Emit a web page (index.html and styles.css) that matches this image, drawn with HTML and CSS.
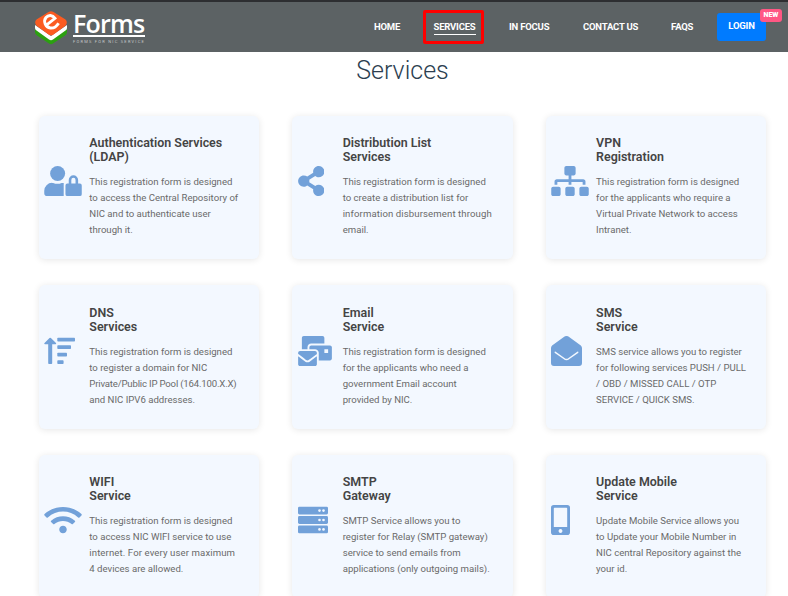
FILE: index.html
```html
<!DOCTYPE html>
<html lang="en">
<head>
<meta charset="utf-8">
<title>eForms Services</title>
<link rel="stylesheet" href="styles.css">
</head>
<body>
<header class="header">
  <div class="brand">
    <svg class="brand-mark" viewBox="0 0 34 36">
      <path d="M1 18 L17 29 L33 18 V22 Q33 24 31 25.5 L19 33.6 Q17 35 15 33.6 L3 25.5 Q1 24 1 22Z" fill="#2ba010"/>
      <path d="M1 15 L17 26 L33 15 V18 Q33 19.500 31.500 20.500 L19 29.500 Q17 31 15 29.500 L2.500 20.500 Q1 19.500 1 18Z" fill="#fff"/>
      <path d="M14.500 2 Q17 .4 19.500 2 L31.500 9.500 Q34 12 31.800 15.500 L19.500 24.500 Q17 26.200 14.500 24.500 L2.200 15.500 Q0 12 2.500 9.500Z" fill="#fb5b21"/>
      <path d="M13.300 14.300 L21 8.300 C18.500 4.800 14.500 4.500 12 7.500 C8.900 11.200 11.500 17.300 16.300 18 C19.500 18.400 22.500 16.500 24.600 13.200" fill="none" stroke="#fff" stroke-width="2.900"/>
    </svg>
    <div class="brand-text">
      <span class="brand-name">Forms</span>
      <span class="brand-tag">FORMS FOR NIC SERVICE</span>
    </div>
  </div>
  <nav class="nav">
    <a class="home">HOME</a>
    <a class="active"><span>SERVICES</span></a>
    <a class="focus">IN FOCUS</a>
    <a class="contact">CONTACT US</a>
    <a class="faqs">FAQS</a>
    <a class="login">LOGIN<b class="badge">NEW</b></a>
  </nav>
</header>
<main>
  <h1>Services</h1>
  <section class="grid">
    <article class="card">
      <div class="icon"><svg width="38" height="30" viewBox="0 0 640 512"><circle cx="228" cy="128" r="128"/><path d="M135 288h17a174 174 0 0 0 146 0h17q10 0 17 2v222H48a48 48 0 0 1-48-48v-42A134 134 0 0 1 135 288z"/><path fill-rule="evenodd" d="M394 300h24v-62a80 80 0 0 1 160 0v62h30a32 32 0 0 1 32 32v148a32 32 0 0 1-32 32H394a32 32 0 0 1-32-32V332a32 32 0 0 1 32-32zm68 0h72v-62a36 36 0 0 0-72 0z"/></svg></div>
      <div><h2>Authentication Services<br>(LDAP)</h2><p>This registration form is designed<br>to access the Central Repository of<br>NIC and to authenticate user<br>through it.</p></div>
    </article>
    <article class="card">
      <div class="icon"><svg width="26.500" height="30" viewBox="0 0 448 512"><path d="M352 320c-22.608 0-43.387 7.819-59.79 20.895l-102.486-64.054a96.551 96.551 0 0 0 0-41.683l102.486-64.054C308.613 184.181 329.392 192 352 192c53.019 0 96-42.981 96-96S405.019 0 352 0s-96 42.981-96 96c0 7.158.79 14.13 2.276 20.841L155.79 180.895C139.387 167.819 118.608 160 96 160c-53.019 0-96 42.981-96 96s42.981 96 96 96c22.608 0 43.387-7.819 59.79-20.895l102.486 64.054A96.301 96.301 0 0 0 256 416c0 53.019 42.981 96 96 96s96-42.981 96-96-42.981-96-96-96z"/></svg></div>
      <div><h2>Distribution List<br>Services</h2><p>This registration form is designed<br>to create a distribution list for<br><span class="wide">information disbursement through</span><br>email.</p></div>
    </article>
    <article class="card">
      <div class="icon"><svg width="38" height="30" viewBox="0 0 640 512"><path d="M128 352H32c-17.67 0-32 14.33-32 32v96c0 17.67 14.33 32 32 32h96c17.67 0 32-14.33 32-32v-96c0-17.67-14.33-32-32-32zm-24-80h192v48h48v-48h192v48h48v-57.59c0-21.17-17.23-38.41-38.41-38.41H344v-64h40c17.67 0 32-14.33 32-32V32c0-17.67-14.33-32-32-32H256c-17.67 0-32 14.33-32 32v96c0 17.67 14.33 32 32 32h40v64H94.41C73.23 224 56 241.23 56 262.41V320h48v-48zm264 80h-96c-17.67 0-32 14.33-32 32v96c0 17.67 14.33 32 32 32h96c17.67 0 32-14.33 32-32v-96c0-17.67-14.33-32-32-32zm240 0h-96c-17.67 0-32 14.33-32 32v96c0 17.67 14.33 32 32 32h96c17.67 0 32-14.33 32-32v-96c0-17.67-14.33-32-32-32z"/></svg></div>
      <div><h2>VPN<br>Registration</h2><p>This registration form is designed<br>for the applicants who require a<br>Virtual Private Network to access<br>Intranet.</p></div>
    </article>
    <article class="card">
      <div class="icon"><svg width="32" height="30" viewBox="0 0 32 30"><path d="M5.500 2Q6.200 1.300 6.900 2L12 7.100Q12.500 8.100 11.500 8.200H8.200V27.200q0 .8-.8.8H5q-.8 0-.8-.8V8.200H1Q-.1 8.100.5 7.100z"/><rect x="13.300" y="1.700" width="17.700" height="3.800" rx=".8"/><rect x="13.300" y="9.200" width="13.700" height="3.800" rx=".8"/><rect x="13.300" y="16.700" width="9.700" height="3.800" rx=".8"/><rect x="13.300" y="24.200" width="6.300" height="3.800" rx=".8"/></svg></div>
      <div><h2>DNS<br>Services</h2><p>This registration form is designed<br>to register a domain for NIC<br><span class="tight">Private/Public IP Pool (164.100.X.X)</span><br>and NIC IPV6 addresses.</p></div>
    </article>
    <article class="card">
      <div class="icon"><svg width="34" height="30" viewBox="0 0 576 512"><path d="M160 448c-25.6 0-51.2-22.4-64-32-64-44.8-83.2-60.8-96-70.4V480c0 17.67 14.33 32 32 32h256c17.67 0 32-14.33 32-32V345.600c-12.8 9.6-32 25.6-96 70.4-12.8 9.6-38.4 32-64 32zm128-192H32c-17.67 0-32 14.33-32 32v16c25.6 19.2 22.4 19.2 115.2 86.4 9.6 6.4 28.8 25.6 44.8 25.6s35.2-19.2 44.8-22.4c92.8-67.2 89.6-67.2 115.2-86.4V288c0-17.67-14.33-32-32-32zm256-96H224c-17.67 0-32 14.33-32 32v32h96c33.21 0 60.59 25.42 63.71 57.82l.29-.22V416h192c17.67 0 32-14.33 32-32V192c0-17.67-14.33-32-32-32zm-32 128h-64v-64h64v64zm-352-96c0-35.29 28.71-64 64-64h224V32c0-17.67-14.33-32-32-32H96C78.33 0 64 14.33 64 32v192h96v-32z"/></svg></div>
      <div><h2>Email<br>Service</h2><p>This registration form is designed<br>for the applicants who need a<br>government Email account<br>provided by NIC.</p></div>
    </article>
    <article class="card">
      <div class="icon"><svg width="31" height="30" viewBox="0 0 31 30"><path d="M1.100 9.500L12.500 1.200Q15.500-1.200 18.500 1.200L29.800 9.500Q31 10.500 31 12V27q0 3-3 3H3q-3 0-3-3V12Q0 10.500 1.100 9.500z"/><path class="crease" d="M4.300 16.300L13 22.500Q15.500 24.600 18 22.500L26.700 16.300"/></svg></div>
      <div><h2>SMS<br>Service</h2><p>SMS service allows you to register<br>for following services PUSH / PULL<br>/ OBD / MISSED CALL / OTP<br>SERVICE / QUICK SMS.</p></div>
    </article>
    <article class="card">
      <div class="icon"><svg width="38" height="30" viewBox="0 0 640 512"><path d="M634.91 154.88C457.74-8.99 182.19-8.93 5.09 154.88c-6.66 6.16-6.79 16.59-.35 22.98l34.24 33.97c6.14 6.1 16.02 6.23 22.4.38 145.92-133.68 371.3-133.71 517.25 0 6.38 5.85 16.26 5.71 22.4-.38l34.24-33.97c6.43-6.39 6.3-16.82-.36-22.98zM320 352c-35.35 0-64 28.65-64 64s28.65 64 64 64 64-28.65 64-64-28.65-64-64-64zm202.67-83.59c-115.26-101.93-290.21-101.82-405.34 0-6.9 6.1-7.12 16.69-.57 23.15l34.44 33.99c6 5.92 15.66 6.32 22.05.8 83.95-72.57 209.74-72.41 293.49 0 6.39 5.52 16.05 5.13 22.05-.8l34.44-33.99c6.56-6.46 6.33-17.06-.56-23.15z"/></svg></div>
      <div><h2>WIFI<br>Service</h2><p>This registration form is designed<br>to access NIC WIFI service to use<br><span class="wide">internet. For every user maximum</span><br>4 devices are allowed.</p></div>
    </article>
    <article class="card">
      <div class="icon"><svg width="30" height="30" viewBox="0 0 30 30"><rect y="1.700" width="30" height="7.800" rx="1.400"/><rect y="11.100" width="30" height="7.800" rx="1.400"/><rect y="20.500" width="30" height="7.800" rx="1.400"/><g fill="#f3f8ff"><circle cx="21.500" cy="5.600" r="1.300"/><circle cx="25.500" cy="5.600" r="1.300"/><circle cx="21.500" cy="15" r="1.300"/><circle cx="25.500" cy="15" r="1.300"/><circle cx="21.500" cy="24.400" r="1.300"/><circle cx="25.500" cy="24.400" r="1.300"/></g></svg></div>
      <div><h2>SMTP<br>Gateway</h2><p>SMTP Service allows you to<br>register for Relay (SMTP gateway)<br>service to send emails from<br>applications (only outgoing mails).</p></div>
    </article>
    <article class="card">
      <div class="icon"><svg width="19" height="30" viewBox="0 0 19 30"><path fill-rule="evenodd" d="M2.800 0H16.200Q19 0 19 2.800V27.200Q19 30 16.200 30H2.800Q0 30 0 27.200V2.800Q0 0 2.800 0zM3.500 2.800Q2.800 2.800 2.800 3.500V22H16.200V3.500Q16.200 2.800 15.500 2.800zM9.500 24.100a1.900 1.900 0 1 0 .01 0z"/></svg></div>
      <div><h2>Update Mobile<br>Service</h2><p>Update Mobile Service allows you<br>to Update your Mobile Number in<br>NIC central Repository against the<br>your id.</p></div>
    </article>
  </section>
</main>
</body>
</html>
```
FILE: styles.css
```css
* { box-sizing: border-box; }
html, body { margin: 0; height: 596px; overflow: hidden; }
body { font-family: Roboto, sans-serif; background: #fff; }
.header {
  height: 52px;
  border-top: 2px solid #2d2e31;
  background: #5c6264;
  display: flex;
  justify-content: space-between;
  align-items: flex-start;
  padding: 0 22px 0 34px;
}
.brand { display: flex; gap: 5px; padding-top: 8px; }
.brand-mark { width: 34px; height: 36px; }
.brand-text { display: flex; flex-direction: column; width: 72px; }
.brand-name {
  font: 600 25px/26px "Open Sans", sans-serif;
  height: 27px;
  color: #fff;
  letter-spacing: -.8px;
  border-bottom: 2px solid #fff;
  white-space: nowrap;
}
.brand-tag { font-size: 4px; line-height: 5px; padding-top: 2px; color: #c5c8c9; letter-spacing: 1.250px; white-space: nowrap; }
.nav { display: flex; align-items: flex-start; padding-top: 8px; }
.nav a { font-size: 9.500px; font-weight: 700; line-height: 14px; padding-top: 10px; color: #fff; white-space: nowrap; letter-spacing: -.2px; }
.home { width: 49px; }
.nav .active { width: 61px; height: 34px; border: 3px solid #f00; border-radius: 2px; margin-right: 25px; padding: 7px 0 0 7.500px; }
.active span { display: inline-block; border-bottom: 1px solid #fff; height: 15px; }
.focus { width: 74px; }
.contact { width: 88px; }
.faqs { width: 46px; }
.nav .login { position: relative; width: 49px; height: 28px; margin-top: 3px; padding-top: 0; background: #007bff; border-radius: 3px; text-align: center; line-height: 26px; }
.badge { position: absolute; left: 43px; top: -4px; width: 22px; height: 13px; border-radius: 3px; background: #ff5784; font-size: 7px; line-height: 12px; letter-spacing: 0; }
h1 { margin: 0; padding-left: 17px; height: 63.500px; font-size: 25px; line-height: 37px; font-weight: 300; text-align: center; color: #2c3e50; }
.grid { display: grid; grid-template-columns: repeat(3, 220.500px); grid-auto-rows: 143.600px; column-gap: 32.900px; row-gap: 26px; padding-left: 38.800px; }
.card { display: flex; padding: 20.500px 0 0 5.500px; border-radius: 6px; background: #f3f8ff; box-shadow: 0 1px 7px rgba(0, 0, 0, .1); white-space: nowrap; }
.icon { width: 45px; padding-top: 30px; flex: none; }
.icon svg { display: block; fill: #72a1d9; }
.icon .crease { fill: none; stroke: #f3f8ff; stroke-width: 1.500; stroke-linecap: round; }
h2 { margin: 0; font-size: 12.450px; line-height: 14px; font-weight: 600; color: #444; }
p { margin: 10px 0 0; font-size: 9.600px; line-height: 16px; color: #6a6a6a; }
.wide { letter-spacing: .1px; }
.tight { letter-spacing: -.18px; }
```
